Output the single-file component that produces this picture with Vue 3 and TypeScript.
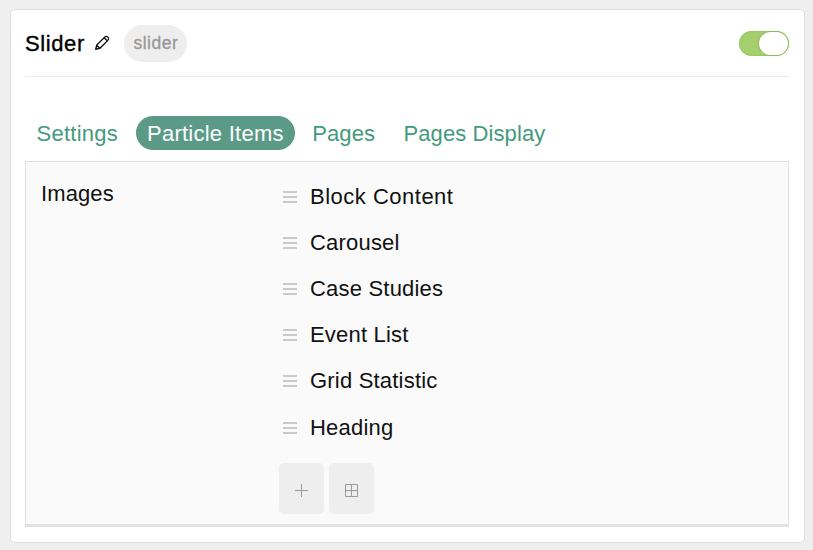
<script setup lang="ts">
import { ref } from 'vue'

const tabs = ref<string[]>(['Settings', 'Particle Items', 'Pages', 'Pages Display'])
const activeTab = ref<string>('Particle Items')
const enabled = ref<boolean>(true)
const items = ref<string[]>([
  'Block Content',
  'Carousel',
  'Case Studies',
  'Event List',
  'Grid Statistic',
  'Heading',
])
</script>

<template>
  <main class="page">
    <section class="card">
      <header class="header">
        <h1 class="title">Slider</h1>
        <svg class="pencil" viewBox="0 0 16 16" width="16" height="16">
          <path d="M1.8 14.2 L2.7 10.1 L10.6 2.2 Q12.4 .6 13.9 2.1 Q15.4 3.6 13.8 5.4 L5.9 13.3 Z M2.8 10.3 L5.7 13.2 M10.2 2.8 L13.2 5.8" />
          <path class="tip" d="M1.4 14.6 L2 12 L4 14 Z" />
        </svg>
        <span class="badge">slider</span>
        <button class="toggle" :class="{ on: enabled }" aria-label="Enabled" @click="enabled = !enabled">
          <span class="knob"></span>
        </button>
      </header>

      <nav class="tabs">
        <a
          v-for="tab in tabs"
          :key="tab"
          class="tab"
          :class="{ active: tab === activeTab }"
          @click="activeTab = tab"
        >{{ tab }}</a>
      </nav>

      <div class="panel">
        <div class="label">Images</div>
        <div class="field">
          <ul class="list">
            <li v-for="item in items" :key="item" class="item">
              <svg class="handle" viewBox="0 0 14 12" width="14" height="12">
                <path d="M0 1H14M0 6H14M0 11H14" />
              </svg>
              <span class="name">{{ item }}</span>
            </li>
          </ul>
          <div class="actions">
            <button class="action" aria-label="Add item">
              <svg viewBox="0 0 13 13" width="13" height="13"><path d="M6.5 0V13M0 6.5H13" /></svg>
            </button>
            <button class="action" aria-label="Edit all items">
              <svg viewBox="0 0 13 13" width="13" height="13">
                <path d="M.5 .5H12.5V12.5H.5ZM6.5 .5V12.5M.5 6.5H12.5" />
              </svg>
            </button>
          </div>
        </div>
      </div>
    </section>
  </main>
</template>

<style>
body {
  background: #efefef;
}
</style>

<style scoped>
.page {
  box-sizing: border-box;
  height: 550px;
  padding: 9px 8px 7px 10px;
  font-family: "Liberation Sans", Arial, sans-serif;
  font-size: 22px;
  letter-spacing: 0.2px;
  color: #111;
}
.card {
  box-sizing: border-box;
  height: 534px;
  padding: 0 15px 0 14px;
  background: #fff;
  border: 1.5px solid #dedede;
  border-radius: 5px;
}
.header {
  box-sizing: border-box;
  display: flex;
  align-items: center;
  height: 67px;
  border-bottom: 1px solid #ebebeb;
}
.title {
  margin: 0;
  padding-top: 2px;
  font-size: 22px;
  font-weight: 400;
  line-height: 26px;
  letter-spacing: 0.6px;
  color: #000;
  -webkit-text-stroke: 0.35px #000;
}
.pencil {
  margin-left: 9px;
  fill: none;
  stroke: #111;
  stroke-width: 1.3;
}
.pencil .tip {
  fill: #111;
  stroke: none;
}
.badge {
  box-sizing: border-box;
  width: 63px;
  height: 37px;
  margin-left: 14.5px;
  border-radius: 19px;
  background: #eee;
  color: #999;
  font-size: 17.5px;
  line-height: 36px;
  letter-spacing: 0.5px;
  text-align: center;
  -webkit-text-stroke: 0.35px #999;
}
.toggle {
  display: flex;
  width: 50px;
  height: 25px;
  margin-left: auto;
  padding: 1px;
  border: 0;
  border-radius: 13px;
  background: #ccc;
}
.toggle.on {
  justify-content: flex-end;
  background: #a4cf6c;
  box-shadow: inset 0 0 2px #86b750;
}
.knob {
  width: 29px;
  height: 23px;
  border-radius: 12px;
  background: #fff;
  box-shadow: 0 0 2px rgba(60, 100, 20, 0.5);
}
.tabs {
  display: flex;
  gap: 6px;
  height: 34px;
  padding-top: 39px;
}
.tab {
  padding: 0 11.5px;
  border-radius: 17px;
  line-height: 35px;
  letter-spacing: 0.25px;
  color: #439a7c;
  white-space: nowrap;
}
.tab:nth-child(n + 3) {
  padding: 0 11.3px 0 11px;
  letter-spacing: 0.1px;
}
.tab.active {
  background: #5a9a86;
  color: #fff;
}
.panel {
  box-sizing: border-box;
  display: flex;
  height: 366px;
  margin-top: 11px;
  border: 1.5px solid #e0e0e0;
  border-bottom: 3px solid #e2e2e2;
  background: #fafafa;
}
.label {
  width: 238px;
  padding: 19px 0 0 15px;
  line-height: 26px;
  letter-spacing: 0.1px;
}
.field {
  padding-top: 12px;
}
.list {
  margin: 0;
  padding: 0 0 0 4px;
  list-style: none;
}
.item {
  display: flex;
  align-items: center;
  gap: 13px;
  height: 46.1px;
}
.item:first-child {
  letter-spacing: 0.5px;
}
.handle {
  fill: none;
  stroke: #bbb;
  stroke-width: 1.3;
}
.actions {
  display: flex;
  gap: 5.5px;
  margin-top: 12.4px;
}
.action {
  display: flex;
  align-items: center;
  justify-content: center;
  width: 44.5px;
  height: 51px;
  padding: 4px 0 0;
  border: 0;
  border-radius: 5px;
  background: #eee;
}
.action svg {
  fill: none;
  stroke: #9b9b9b;
  stroke-width: 1;
}
</style>
